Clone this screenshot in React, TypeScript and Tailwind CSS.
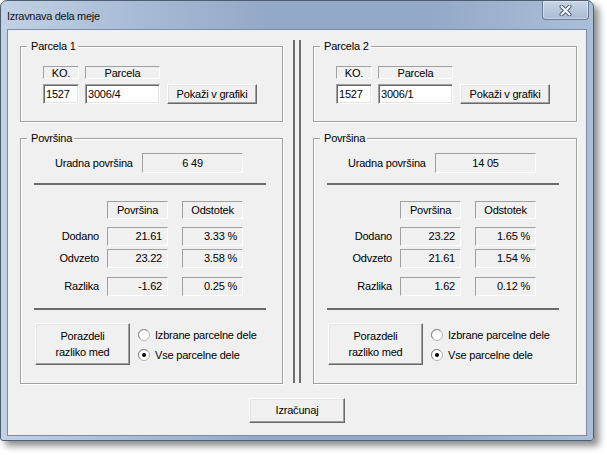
import React from "react";

const edge =
  "border border-t-[#a0a0a0] border-l-[#a0a0a0] border-r-white border-b-white";
const raised =
  "bg-[#f0f0f0] border border-t-white border-l-white border-r-[#696969] border-b-[#696969] shadow-[inset_-1px_-1px_0_#a0a0a0,inset_1px_1px_0_#e3e3e3]";

function Group({
  label,
  className,
  children,
}: {
  label: string;
  className?: string;
  children?: React.ReactNode;
}) {
  return (
    <div
      className={`relative border border-[#a0a0a0] shadow-[inset_1px_1px_0_#fff,1px_1px_0_#fff] flex flex-col ${className ?? ""}`}
    >
      <span className="absolute -top-[8px] left-[6px] bg-[#f0f0f0] pl-[4px] pr-[2px] leading-[14px]">
        {label}
      </span>
      {children}
    </div>
  );
}

function Radio({ checked, label }: { checked?: boolean; label: string }) {
  return (
    <div className="h-[20px] flex items-center">
      <svg width="12" height="12" viewBox="0 0 12 12" className="shrink-0">
        <circle cx="6" cy="6" r="5.5" fill="#fff" stroke="#b4b4b4" />
        <path d="M2 9.5 A5 5 0 0 1 9.5 2" fill="none" stroke="#8a8a8a" />
        {checked && <circle cx="6" cy="6" r="2" fill="#000" />}
      </svg>
      <span className="ml-[5px] whitespace-nowrap">{label}</span>
    </div>
  );
}

type Parcel = {
  n: number;
  ko: string;
  parcela: string;
  uradna: string;
  rows: { label: string; pov: string; pct: string; gap: string }[];
};

const parcels: Parcel[] = [
  {
    n: 1,
    ko: "1527",
    parcela: "3006/4",
    uradna: "6 49",
    rows: [
      { label: "Dodano", pov: "21.61", pct: "3.33 %", gap: "mt-[8px]" },
      { label: "Odvzeto", pov: "23.22", pct: "3.58 %", gap: "mt-[3px]" },
      { label: "Razlika", pov: "-1.62", pct: "0.25 %", gap: "mt-[9px]" },
    ],
  },
  {
    n: 2,
    ko: "1527",
    parcela: "3006/1",
    uradna: "14 05",
    rows: [
      { label: "Dodano", pov: "23.22", pct: "1.65 %", gap: "mt-[8px]" },
      { label: "Odvzeto", pov: "21.61", pct: "1.54 %", gap: "mt-[3px]" },
      { label: "Razlika", pov: "1.62", pct: "0.12 %", gap: "mt-[9px]" },
    ],
  },
];

function ParcelColumn({ p, className }: { p: Parcel; className?: string }) {
  return (
    <div className={`w-[263px] pt-[6px] flex flex-col gap-[16px] ${className ?? ""}`}>
      <Group label={`Parcela ${p.n}`} className="h-[76px]">
        <div className="mt-[19px] ml-[22px] flex gap-[6px] h-[13px]">
          <div className={`${edge} w-[36px] flex items-center justify-center leading-none pt-px`}>
            KO.
          </div>
          <div className={`${edge} w-[75px] flex items-center justify-center leading-none pt-px`}>
            Parcela
          </div>
        </div>
        <div className="mt-[5px] ml-[22px] flex h-[20px]">
          <div className="w-[36px] bg-white border border-t-[#a0a0a0] border-l-[#a0a0a0] border-r-white border-b-white shadow-[inset_1px_1px_0_#696969,inset_-1px_-1px_0_#e3e3e3] pl-[2px] flex items-center">
            {p.ko}
          </div>
          <div className="ml-[6px] w-[75px] bg-white border border-t-[#a0a0a0] border-l-[#a0a0a0] border-r-white border-b-white shadow-[inset_1px_1px_0_#696969,inset_-1px_-1px_0_#e3e3e3] pl-[2px] flex items-center">
            {p.parcela}
          </div>
          <button className={`${raised} ml-[7px] w-[90px] flex items-center justify-center`}>
            Pokaži v grafiki
          </button>
        </div>
      </Group>

      <Group label="Površina" className="h-[246px]">
        <div className="mt-[14px] ml-[34px] flex items-center h-[20px]">
          <span className="w-[87px] whitespace-nowrap">Uradna površina</span>
          <div className={`${edge} w-[101px] h-[20px] flex items-center justify-center`}>
            {p.uradna}
          </div>
        </div>
        <div className="mt-[10px] ml-[13px] w-[232px] h-[2px] bg-[#6b6b6b]" />
        <div className="mt-[16px] ml-[13px] flex h-[18px]">
          <div className="w-[73px]" />
          <div className={`${edge} w-[61px] flex items-center justify-center`}>Površina</div>
          <div className={`${edge} ml-[14px] w-[61px] flex items-center justify-center`}>
            Odstotek
          </div>
        </div>
        {p.rows.map((r) => (
          <div key={r.label} className={`${r.gap} ml-[13px] flex items-center h-[19px]`}>
            <span className="w-[73px] pr-[8px] text-right">{r.label}</span>
            <div className={`${edge} w-[61px] h-[19px] flex items-center justify-end pr-[5px]`}>
              {r.pov}
            </div>
            <div className={`${edge} ml-[14px] w-[61px] h-[19px] flex items-center justify-end pr-[5px]`}>
              {r.pct}
            </div>
          </div>
        ))}
        <div className="mt-[12px] ml-[13px] w-[232px] h-[2px] bg-[#6b6b6b]" />
        <div className="mt-[13px] ml-[14px] flex">
          <button
            className={`${raised} w-[95px] h-[42px] flex flex-col items-center justify-center leading-[16px]`}
          >
            <span>Porazdeli</span>
            <span>razliko med</span>
          </button>
          <div className="ml-[8px] pt-[2px] flex flex-col">
            <Radio label="Izbrane parcelne dele" />
            <Radio checked label="Vse parcelne dele" />
          </div>
        </div>
      </Group>
    </div>
  );
}

export default function App() {
  return (
    <div className="w-[607px] h-[455px] bg-white font-['Liberation_Sans',Arial,sans-serif] text-[11px] tracking-[-0.2px] text-black">
      <div className="w-[594px] h-[441px] rounded-t-[7px] rounded-b-[3px] border border-[#4d5d72] shadow-[5px_5px_7px_rgba(0,0,0,0.45)] bg-[linear-gradient(to_right,#c2d1e4_0%,#a9bcd6_22%,#92a9c7_45%,#92a9c7_72%,#abbfd8_100%)] flex flex-col">
        <div className="h-[28px] flex items-start justify-between">
          <span className="pl-[6px] pt-[8px] leading-[14px] text-[11px] tracking-[-0.3px] text-[#111]">
            Izravnava dela meje
          </span>
          <div className="mr-[4px] w-[47px] h-[19px] rounded-b-[4px] border border-t-0 border-[#6a7c95] shadow-[inset_0_0_0_1px_rgba(255,255,255,0.4)] bg-[linear-gradient(to_bottom,#c8d5e6,#a8bbd4)] flex items-center justify-center">
            <svg width="13" height="11" viewBox="0 0 13 11">
              <path d="M2.5 1.5 L10.5 9.5 M10.5 1.5 L2.5 9.5" stroke="#4a5a70" strokeWidth="4" strokeLinecap="round" />
              <path d="M2.5 1.5 L10.5 9.5 M10.5 1.5 L2.5 9.5" stroke="#f4f6f9" strokeWidth="2.2" strokeLinecap="round" />
            </svg>
          </div>
        </div>
        <div className="mx-[6px] h-[407px] border border-[#7b8ca4] bg-[#f0f0f0] flex flex-col">
          <div className="flex pl-[12px] pt-[10px]">
            <ParcelColumn p={parcels[0]} />
            <div className="ml-[10px] w-[8px] h-[343px] flex gap-[4px]">
              <div className="w-[2px] bg-[#6e6e6e]" />
              <div className="w-[2px] bg-[#6e6e6e]" />
            </div>
            <ParcelColumn p={parcels[1]} className="ml-[12px] !w-[264px]" />
          </div>
          <div className="mt-[14px] flex justify-center">
            <button className={`${raised} w-[96px] h-[25px] flex items-center justify-center`}>
              Izračunaj
            </button>
          </div>
        </div>
      </div>
    </div>
  );
}
